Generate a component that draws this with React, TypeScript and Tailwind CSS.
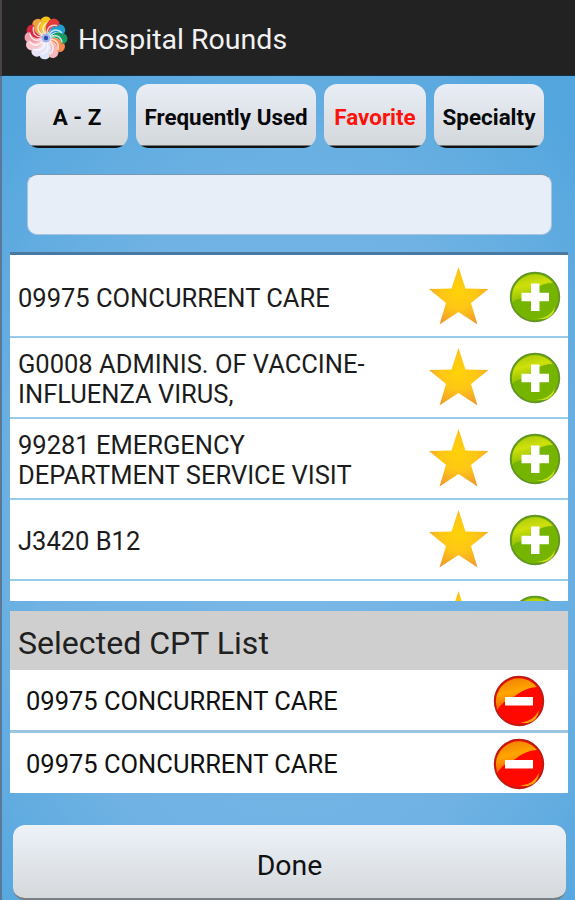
import React from "react";

const PETALS = [
  "#f5c518", "#f0a03c", "#d7263d", "#f3a0ac", "#f7c9cf", "#e9e3f5",
  "#dbe6f8", "#f4b9bd", "#f58a4b", "#159a62", "#1f9fd0", "#e23b3b",
];
const ANGLES = [-5, -35, -65, -92, -120, -150, 180, 150, 118, 88, 55, 25];

function Logo() {
  return (
    <svg width="44" height="44" viewBox="-22 -22 44 44" className="shrink-0">
      <circle r="18" fill="#f6f1f6" />
      {PETALS.map((c, i) => (
        <g key={i} transform={`rotate(${ANGLES[i]})`}>
          <path d="M0 -3C-7 -8 -7 -18 -1 -21C4 -22.500 7.500 -19 6 -15.500C1 -15 -1 -9 0 -3Z" fill={c} />
          <path d="M0 -3C-4 -9 -2 -14.500 5 -16" fill="none" stroke="#fff" strokeOpacity=".75" strokeWidth="1.500" />
        </g>
      ))}
      <circle r="4.500" fill="#9fb5ea" />
      <circle r="2.200" fill="#2b4bb0" />
    </svg>
  );
}

function Star() {
  return (
    <svg width="60" height="58" viewBox="0 0 60 58" className="block shrink-0">
      <defs>
        <radialGradient id="starFill" cx=".5" cy=".42" r=".62">
          <stop offset="0" stopColor="#ffd208" />
          <stop offset=".5" stopColor="#fec616" />
          <stop offset="1" stopColor="#f09a2c" />
        </radialGradient>
      </defs>
      <path d="M29.500 0L36.500 21.500L59.500 22L42 36L48.500 57.500L29.500 45L10.500 57.500L17 36L0 22L22.500 21.500Z" fill="url(#starFill)" />
    </svg>
  );
}

function Plus() {
  return (
    <svg width="52" height="52" viewBox="0 0 52 52" className="block shrink-0">
      <defs>
        <linearGradient id="plusGloss" x1="0" y1="0" x2=".3" y2="1">
          <stop offset="0" stopColor="#a4c80c" />
          <stop offset=".45" stopColor="#cfe00a" />
          <stop offset="1" stopColor="#84bb02" />
        </linearGradient>
      </defs>
      <circle cx="26" cy="26" r="24.300" fill="#75b500" stroke="#629524" strokeWidth="1.800" />
      <path d="M3 26A23 23 0 0 1 44 12C31 12 22 20 17 25C12 28 6 28 3 32Z" fill="url(#plusGloss)" />
      <path d="M27 48Q41 47 46 36Q45 46 35 48Z" fill="#c8df16" />
      <path d="M22 12.500H30.500V21.800H40V30.200H30.500V40H22V30.200H12.500V21.800H22Z" fill="#fff" />
    </svg>
  );
}

function Minus() {
  return (
    <svg width="52" height="52" viewBox="0 0 52 52" className="block shrink-0">
      <defs>
        <linearGradient id="minusGloss" x1="0" y1="0" x2=".25" y2="1">
          <stop offset="0" stopColor="#ef7b04" />
          <stop offset=".5" stopColor="#ffa600" />
          <stop offset="1" stopColor="#ff5a00" />
        </linearGradient>
      </defs>
      <circle cx="26" cy="26" r="24.300" fill="#ff0800" stroke="#bd1a12" strokeWidth="1.800" />
      <path d="M3 27A23 23 0 0 1 44 12C31 13 25 19 18 24C11 25 6 32 4 35Z" fill="url(#minusGloss)" />
      <path d="M27 48Q41 46 46 35Q45 46 35 48Z" fill="#ff9d0c" />
      <rect x="12" y="22" width="28" height="8.500" fill="#fff" />
    </svg>
  );
}

function Tab({ label, size, active }: { label: string; size: string; active?: boolean }) {
  return (
    <button
      className={`${size} flex h-16 items-center justify-center whitespace-nowrap rounded-[13px] bg-[linear-gradient(to_bottom,#e9eef6_0px,#dfe3e9_30px,#d3d8db_61px,#111_62px)] pb-0 pt-[3px] text-[22.400px] font-bold ${active ? "text-[#ff120a]" : "text-[#08090b]"}`}
    >
      {label}
    </button>
  );
}

const ITEMS = [
  ["09975 CONCURRENT CARE"],
  ["G0008 ADMINIS. OF VACCINE-", "INFLUENZA VIRUS,"],
  ["99281 EMERGENCY", "DEPARTMENT SERVICE VISIT"],
  ["J3420 B12"],
  [""],
];

export default function App() {
  return (
    <div className="flex h-[900px] w-[575px] overflow-hidden bg-[#5c7899] font-[Roboto,sans-serif]">
      <div className="w-0.5 shrink-0" />
      <div className="flex min-w-0 flex-1 flex-col bg-[radial-gradient(ellipse_410px_560px_at_50%_60%,#7ab8e7_0%,#6fb2e3_62%,#54a6de_100%)]">
        <header className="-ml-0.5 flex h-[76px] shrink-0 items-center gap-2.5 border-b border-l-2 border-b-[#183248] border-l-[#4a4445] bg-[#222] pl-[22px] text-[28.500px] text-[#f1f1f1]">
          <Logo />
          <h1 className="pt-[5px]">Hospital Rounds</h1>
        </header>

        <nav className="ml-6 mt-2 flex shrink-0 gap-2">
          <Tab label="A - Z" size="w-[102px]" />
          <Tab label="Frequently Used" size="w-[180px]" />
          <Tab label="Favorite" size="w-[102px]" active />
          <Tab label="Specialty" size="w-[110px]" />
        </nav>

        <input
          aria-label="Search"
          className="ml-[25px] mt-[26px] block h-[61px] w-[525px] shrink-0 rounded-[10px] border border-[#a9c4e0] border-t-[#7797b3] bg-[#e8eef7] outline-none"
        />

        <section className="ml-2 mt-[17px] h-[349px] w-[558px] shrink-0 overflow-hidden border-t-[3px] border-[#4779a3] bg-white pt-0.5">
          {ITEMS.map((lines, i) => (
            <div key={i} className="flex h-[81px] items-center border-b-2 border-[#96cbe9] pl-2 pr-[7px]">
              <p className="flex-1 whitespace-nowrap pt-0.5 text-[25.500px] leading-[30px] text-[#1c1c1c]">
                {lines.map((line) => (
                  <span key={line} className="block">{line}</span>
                ))}
              </p>
              <div className="mr-5 pb-px"><Star /></div>
              <div className="pt-px"><Plus /></div>
            </div>
          ))}
        </section>

        <section className="ml-2 mt-2.5 w-[558px] shrink-0">
          <h2 className="flex h-[59px] items-center bg-[#cfcfcf] pl-2 pt-1 text-[32.100px] leading-[48px] text-[#202020]">Selected CPT List</h2>
          <div className="flex flex-col gap-[3px] bg-[#9bc5e2]">
            {[0, 1].map((i) => (
              <div key={i} className="flex h-[60px] items-center justify-between bg-white pl-4 pr-[23px] text-[25.500px] text-[#111]">
                <span className="pt-[3px]">09975 CONCURRENT CARE</span>
                <div className="pt-px"><Minus /></div>
              </div>
            ))}
          </div>
        </section>

        <button className="ml-[11px] mt-8 flex h-[75px] w-[553px] shrink-0 items-center justify-center rounded-[12px] border-b-2 border-[#777f85] bg-gradient-to-b from-[#edf2f9] to-[#d5d9dc] pt-[9px] text-[28.400px] text-[#111]">
          Done
        </button>
      </div>
    </div>
  );
}
